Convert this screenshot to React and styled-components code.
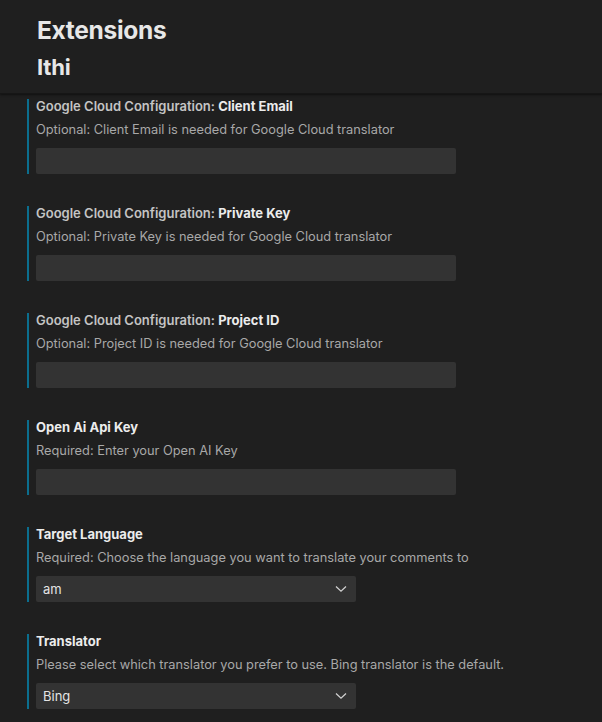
import React from "react";
import styled, { createGlobalStyle } from "styled-components";

const Global = createGlobalStyle`
  html, body { margin: 0; padding: 0; background: #1f1f1f; }
  body { font-family: Inter, "Open Sans", "Liberation Sans", sans-serif; -webkit-font-smoothing: antialiased; }
  * { box-sizing: border-box; }
`;

const Page = styled.div`
  width: 602px;
  height: 722px;
  overflow: hidden;
  background: #1f1f1f;
  display: flex;
  flex-direction: column;
`;

const Header = styled.header`
  height: 94px;
  flex: none;
  padding: 14px 0 0 37px;
  background: #1f1f1f;
  border-bottom: 1px solid #161616;
  box-shadow: 0 1px 2px rgba(0, 0, 0, 0.5);
  position: relative;
  z-index: 1;
`;

const Title = styled.h1`
  margin: 0;
  font-size: 24.5px;
  line-height: 32px;
  font-weight: 700;
  color: #e7e7e7;
  letter-spacing: -0.3px;
`;

const Subtitle = styled.h2`
  margin: 7px 0 0;
  font-size: 22px;
  line-height: 28px;
  font-weight: 700;
  color: #e7e7e7;
  letter-spacing: -0.2px;
`;

const List = styled.div`
  display: flex;
  flex-direction: column;
  gap: 32px;
  padding: 5px 0 0 27px;
`;

const Setting = styled.section`
  border-left: 2px solid #0b6e8e;
  padding-left: 7px;
  display: flex;
  flex-direction: column;
  height: 75px;
`;

const Label = styled.div`
  font-size: 13px;
  line-height: 15px;
  font-weight: 600;
  color: #c4c4c4;
  strong {
    color: #ececec;
    font-weight: 700;
  }
`;

const Description = styled.div`
  margin-top: 8px;
  font-size: 12.8px;
  line-height: 15px;
  color: #a8a8a8;
`;

const Input = styled.div`
  margin-top: 11px;
  width: 420px;
  height: 26px;
  background: #333333;
  border-radius: 2px;
`;

const Select = styled.div`
  margin-top: 11px;
  width: 320px;
  height: 26px;
  background: #333333;
  border-radius: 2px;
  display: flex;
  align-items: center;
  justify-content: space-between;
  padding: 0 9px 0 7px;
  font-size: 13px;
  color: #e4e4e4;
`;

const Chevron = () => (
  <svg width="12" height="8" viewBox="0 0 12 8" fill="none">
    <path d="M1 1.5 L6 6.2 L11 1.5" stroke="#d0d0d0" strokeWidth="1.3" />
  </svg>
);

const settings = [
  { prefix: "Google Cloud Configuration: ", name: "Client Email", desc: "Optional: Client Email is needed for Google Cloud translator" },
  { prefix: "Google Cloud Configuration: ", name: "Private Key", desc: "Optional: Private Key is needed for Google Cloud translator" },
  { prefix: "Google Cloud Configuration: ", name: "Project ID", desc: "Optional: Project ID is needed for Google Cloud translator" },
  { prefix: "", name: "Open Ai Api Key", desc: "Required: Enter your Open AI Key" },
  { prefix: "", name: "Target Language", desc: "Required: Choose the language you want to translate your comments to", select: "am" },
  { prefix: "", name: "Translator", desc: "Please select which translator you prefer to use. Bing translator is the default.", select: "Bing" },
];

export default function App() {
  return (
    <Page>
      <Global />
      <Header>
        <Title>Extensions</Title>
        <Subtitle>Ithi</Subtitle>
      </Header>
      <List>
        {settings.map((s) => (
          <Setting key={s.name}>
            <Label>
              {s.prefix}
              <strong>{s.name}</strong>
            </Label>
            <Description>{s.desc}</Description>
            {s.select ? (
              <Select>
                <span>{s.select}</span>
                <Chevron />
              </Select>
            ) : (
              <Input />
            )}
          </Setting>
        ))}
      </List>
    </Page>
  );
}
